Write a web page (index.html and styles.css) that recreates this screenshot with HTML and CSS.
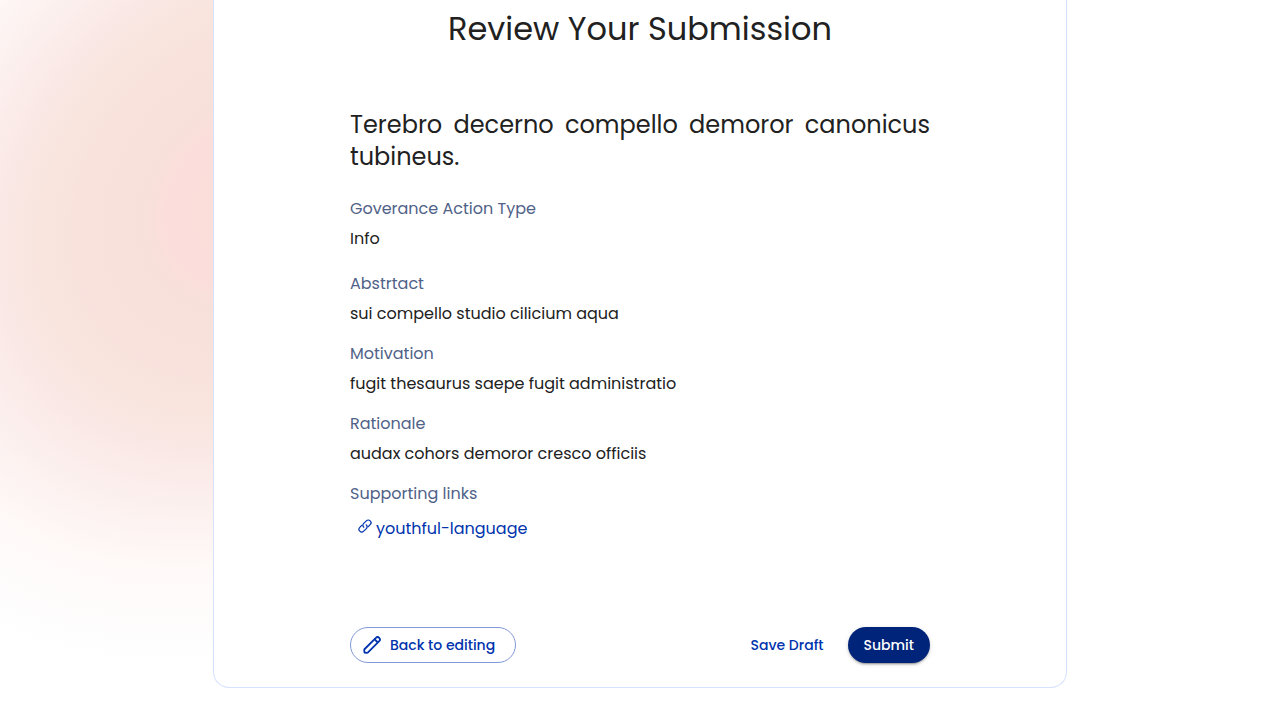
FILE: index.html
```html
<!DOCTYPE html>
<html lang="en">
<head>
<meta charset="utf-8">
<meta name="viewport" content="width=device-width, initial-scale=1">
<title>Review Your Submission</title>
<link rel="stylesheet" href="styles.css">
</head>
<body class="page">
<svg class="glow" width="640" height="720" viewBox="0 0 640 720" aria-hidden="true">
  <defs>
    <radialGradient id="glow" gradientUnits="userSpaceOnUse" cx="0" cy="0" r="1" gradientTransform="translate(255 200) rotate(-42) scale(510 415)">
      <stop offset="0" stop-color="#fbdcd9"/>
      <stop offset=".19" stop-color="#fbdedb"/>
      <stop offset=".24" stop-color="#f7e0da"/>
      <stop offset=".36" stop-color="#f9e1dc"/>
      <stop offset=".46" stop-color="#f9e5de"/>
      <stop offset=".55" stop-color="#fae8e6"/>
      <stop offset=".68" stop-color="#fcf1ef"/>
      <stop offset=".82" stop-color="#fffaf9"/>
      <stop offset=".95" stop-color="#fefdfd"/>
      <stop offset="1" stop-color="#fff"/>
    </radialGradient>
  </defs>
  <rect width="640" height="720" fill="url(#glow)"/>
</svg>
<main class="card">
  <h1 class="title">Review Your Submission</h1>
  <div class="content">
    <h2 class="heading">Terebro decerno compello demoror canonicus tubineus.</h2>
    <dl class="details">
      <div class="item item-type"><dt class="label">Goverance Action Type</dt><dd class="value">Info</dd></div>
      <div class="item"><dt class="label">Abstrtact</dt><dd class="value">sui compello studio cilicium aqua</dd></div>
      <div class="item"><dt class="label">Motivation</dt><dd class="value">fugit thesaurus saepe fugit administratio</dd></div>
      <div class="item"><dt class="label">Rationale</dt><dd class="value">audax cohors demoror cresco officiis</dd></div>
      <div class="item item-links">
        <dt class="label">Supporting links</dt>
        <dd class="value">
          <a class="link" href="#">
            <svg class="link-icon" width="14" height="14" viewBox="0 0 14 14" fill="none" stroke="currentColor" stroke-width="1.200" stroke-linecap="round" aria-hidden="true"><path d="M5.800 8.200a2.700 2.700 0 0 1-.1-3.800L8.300 1.800a2.700 2.700 0 0 1 3.900 3.900L10.300 7.600"/><path d="M8.200 5.800a2.700 2.700 0 0 1 .1 3.800L5.700 12.200a2.700 2.700 0 0 1-3.900-3.900L3.700 6.400"/></svg>
            <span>youthful-language</span>
          </a>
        </dd>
      </div>
    </dl>
    <div class="actions">
      <button class="button button-outlined" type="button">
        <svg width="20" height="20" viewBox="0 0 20 20" fill="none" stroke="currentColor" stroke-width="1.800" stroke-linejoin="round" aria-hidden="true"><path d="M2.500 17.500l-.3-2.300q0-.7.500-1.200L13.900 2.800a2.300 2.300 0 0 1 3.300 3.300L6 17.300q-.5.500-1.200.5l-2.300-.3z"/><path d="M12.500 4.200l3.300 3.300"/></svg>
        Back to editing
      </button>
      <div class="actions-end">
        <button class="button button-text" type="button">Save Draft</button>
        <button class="button button-filled" type="button">Submit</button>
      </div>
    </div>
  </div>
</main>
</body>
</html>
```
FILE: styles.css
```css
* { box-sizing: border-box; }

.page {
  margin: 0;
  min-height: 100vh;
  background: #fff;
  color: #212121;
  font-family: Poppins, "Open Sans", sans-serif;
  font-size: 16px;
  line-height: 24px;
}

.glow {
  position: absolute;
  top: 0;
  left: 0;
  z-index: -1;
}

.card {
  width: 66.7%;
  margin: 0 auto 32px;
  padding: 5px 24px 24px;
  background: #fff;
  border: 1px solid #d6e2ff;
  border-top: 0;
  border-radius: 0 0 16px 16px;
}

.title {
  margin: 0 0 56px;
  font-size: 32px;
  font-weight: 400;
  line-height: 48px;
  text-align: center;
}

.content {
  max-width: 580px;
  margin: 0 auto;
}

.heading {
  margin: 0 0 24px;
  font-size: 24px;
  font-weight: 400;
  line-height: 32px;
  text-align: justify;
}

.details {
  display: flex;
  flex-direction: column;
  gap: 16px;
  margin: 0 0 86px;
}

.item {
  display: flex;
  flex-direction: column;
  gap: 6px;
}

.item-type { margin-bottom: 5px; }
.item-links { gap: 10px; }

.label { color: #506288; }
.value { margin: 0; }

.link {
  display: inline-flex;
  gap: 4px;
  padding-left: 8px;
  color: #0033ad;
  text-decoration: none;
}

.link-icon { margin-top: 2px; }

.actions {
  display: flex;
  justify-content: space-between;
}

.actions-end {
  display: flex;
  gap: 8px;
}

.button {
  display: inline-flex;
  align-items: center;
  gap: 8px;
  height: 36px;
  padding: 0 16px;
  border: 0;
  border-radius: 18px;
  background: transparent;
  color: #0033ad;
  font: inherit;
  font-size: 14px;
  font-weight: 500;
  white-space: nowrap;
  cursor: pointer;
}

.button-outlined {
  min-width: 166px;
  padding: 0 15px 0 11px;
  border: 1px solid #8099d6;
}

.button-filled {
  background: #00247a;
  color: #fff;
  box-shadow: 0 3px 1px -2px rgba(0, 0, 0, .2), 0 2px 2px rgba(0, 0, 0, .14), 0 1px 5px rgba(0, 0, 0, .12);
}
```
